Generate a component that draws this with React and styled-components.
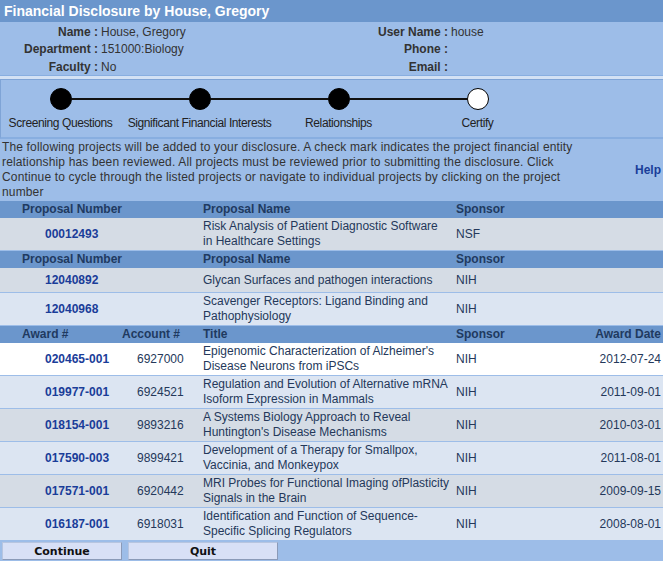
import React from "react";
import styled, { createGlobalStyle } from "styled-components";

const GlobalStyle = createGlobalStyle`
  html, body {
    margin: 0;
    padding: 0;
    background: #9dbde8;
    font-family: "Liberation Sans", Arial, sans-serif;
    font-size: 12px;
    color: #333;
  }
`;

const steps = [
  { label: "Screening Questions", done: true },
  { label: "Significant Financial Interests", done: true },
  { label: "Relationships", done: true },
  { label: "Certify", done: false },
];

const proposalGroups = [
  [{ num: "00012493", name: "Risk Analysis of Patient Diagnostic Software in Healthcare Settings", sponsor: "NSF", tone: "gray" }],
  [
    { num: "12040892", name: "Glycan Surfaces and pathogen interactions", sponsor: "NIH", tone: "gray" },
    { num: "12040968", name: "Scavenger Receptors: Ligand Binding and Pathophysiology", sponsor: "NIH", tone: "light" },
  ],
];

const awards = [
  { num: "020465-001", acct: "6927000", title: "Epigenomic Characterization of Alzheimer's Disease Neurons from iPSCs", sponsor: "NIH", date: "2012-07-24", tone: "white" },
  { num: "019977-001", acct: "6924521", title: "Regulation and Evolution of Alternative mRNA Isoform Expression in Mammals", sponsor: "NIH", date: "2011-09-01", tone: "light" },
  { num: "018154-001", acct: "9893216", title: "A Systems Biology Approach to Reveal Huntington's Disease Mechanisms", sponsor: "NIH", date: "2010-03-01", tone: "gray" },
  { num: "017590-003", acct: "9899421", title: "Development of a Therapy for Smallpox, Vaccinia, and Monkeypox", sponsor: "NIH", date: "2011-08-01", tone: "light" },
  { num: "017571-001", acct: "6920442", title: "MRI Probes for Functional Imaging ofPlasticity Signals in the Brain", sponsor: "NIH", date: "2009-09-15", tone: "gray" },
  { num: "016187-001", acct: "6918031", title: "Identification and Function of Sequence-Specific Splicing Regulators", sponsor: "NIH", date: "2008-08-01", tone: "light" },
];

const App = () => {
  return (
    <Page>
      <GlobalStyle />
      <TitleBar>Financial Disclosure by House, Gregory</TitleBar>
      <Info>
        <InfoCol>
          <Label>Name :</Label><Value>House, Gregory</Value>
          <Label>Department :</Label><Value>151000:Biology</Value>
          <Label>Faculty :</Label><Value>No</Value>
        </InfoCol>
        <InfoCol $right>
          <Label>User Name :</Label><Value>house</Value>
          <Label>Phone :</Label><Value />
          <Label>Email :</Label><Value />
        </InfoCol>
      </Info>
      <Spacer />
      <Steps>
        <StepTrack>
          {steps.map((s, i) => (
            <Step key={s.label}>
              <Track>
                <Connector $off={i === 0} />
                <Dot $done={s.done} />
                <Connector $off={i === steps.length - 1} />
              </Track>
              <StepLabel>{s.label}</StepLabel>
            </Step>
          ))}
        </StepTrack>
      </Steps>
      <Intro>
        <IntroText>
          The following projects will be added to your disclosure. A check mark indicates the project financial entity
          relationship has been reviewed. All projects must be reviewed prior to submitting the disclosure. Click
          Continue to cycle through the listed projects or navigate to individual projects by clicking on the project
          number
        </IntroText>
        <Help>Help</Help>
      </Intro>

      {proposalGroups.map((group, gi) => (
        <Table key={gi} $cols="200px 253px 1fr">
          <HeadCell $pad="22px">Proposal Number</HeadCell>
          <HeadCell>Proposal Name</HeadCell>
          <HeadCell>Sponsor</HeadCell>
          {group.map((p) => (
            <Row key={p.num} $tone={p.tone}>
              <NumCell>{p.num}</NumCell>
              <Cell $padR="6px">{p.name}</Cell>
              <Cell>{p.sponsor}</Cell>
            </Row>
          ))}
        </Table>
      ))}

      <Table $cols="118px 82px 253px 107px 1fr">
        <HeadCell $pad="22px">Award #</HeadCell>
        <HeadCell $pad="4px">Account #</HeadCell>
        <HeadCell>Title</HeadCell>
        <HeadCell>Sponsor</HeadCell>
        <HeadCell $alignRight>Award Date</HeadCell>
        {awards.map((a) => (
          <Row key={a.num} $tone={a.tone}>
            <NumCell>{a.num}</NumCell>
            <Cell $pad="19px">{a.acct}</Cell>
            <Cell $padR="0px">{a.title}</Cell>
            <Cell>{a.sponsor}</Cell>
            <Cell $alignRight>{a.date}</Cell>
          </Row>
        ))}
      </Table>

      <Buttons>
        <Button $w="120px">Continue</Button>
        <Button $w="150px">Quit</Button>
      </Buttons>
    </Page>
  );
};

export default App;

const Page = styled.div`
  width: 663px;
  min-height: 561px;
  background: #9dbde8;
`;

const TitleBar = styled.div`
  height: 22px;
  line-height: 22px;
  padding-left: 4px;
  background: #6b96cc;
  color: #fff;
  font-weight: bold;
  font-size: 14px;
`;

const Info = styled.div`
  display: flex;
  height: 52px;
  padding-top: 1px;
  border-bottom: 1px solid #88aee0;
  background: #9dbde8;
`;

const InfoCol = styled.div`
  display: grid;
  grid-template-columns: ${(p) => (p.$right ? "451px 1fr" : "101px 230px")};
  grid-auto-rows: 17.5px;
  align-items: center;
  margin-left: ${(p) => (p.$right ? "-331px" : "0")};
`;

const Label = styled.span`
  text-align: right;
  font-weight: bold;
  color: #333;
  padding-right: 3px;
`;

const Value = styled.span`
  color: #333;
`;

const Spacer = styled.div`
  height: 3px;
  background: #d3e1f4;
`;

const Steps = styled.div`
  padding-top: 7px;
  height: 50px;
  border-top: 1px solid #7fa4d6;
  border-left: 1px solid #7fa4d6;
  border-bottom: 2px solid #88aee0;
  overflow: hidden;
`;

const StepTrack = styled.div`
  display: grid;
  grid-template-columns: repeat(4, 139px);
  margin-left: -10px;
`;

const Step = styled.div`
  display: flex;
  flex-direction: column;
  align-items: center;
`;

const Track = styled.div`
  display: flex;
  align-items: center;
  width: 100%;
  height: 24px;
`;

const Connector = styled.div`
  flex: 1;
  height: 2px;
  background: ${(p) => (p.$off ? "transparent" : "#111")};
`;

const Dot = styled.div`
  width: 20px;
  height: 20px;
  border-radius: 50%;
  border: 1px solid #000;
  background: ${(p) => (p.$done ? "#000" : "#fff")};
  flex-shrink: 0;
`;

const StepLabel = styled.div`
  margin-top: 5px;
  font-size: 12px;
  letter-spacing: -0.4px;
  color: #222;
  white-space: nowrap;
`;

const Intro = styled.div`
  display: flex;
  align-items: center;
  padding: 1px 2px 1px 2px;
`;

const IntroText = styled.div`
  width: 575px;
  line-height: 15px;
  letter-spacing: 0.15px;
  color: #333;
`;

const Help = styled.a`
  margin-left: auto;
  font-weight: bold;
  color: #1a3d99;
`;

const Table = styled.div`
  display: grid;
  grid-template-columns: ${(p) => p.$cols};
`;

const HeadCell = styled.div`
  background: #6b96cc;
  font-weight: bold;
  color: #1f3a60;
  height: 17px;
  line-height: 17px;
  padding-left: ${(p) => p.$pad || "3px"};
  padding-right: 2px;
  text-align: ${(p) => (p.$alignRight ? "right" : "left")};
  white-space: nowrap;
`;

const toneColors = { white: "#ffffff", light: "#dce5f2", gray: "#d5dce5" };

const Row = styled.div`
  display: contents;
  & > * {
    background: ${(p) => toneColors[p.$tone]};
    border-bottom: 1px solid #9dbde8;
  }
`;

const Cell = styled.div`
  display: flex;
  align-items: center;
  justify-content: ${(p) => (p.$alignRight ? "flex-end" : "flex-start")};
  min-height: 22px;
  padding: 1px ${(p) => p.$padR || "2px"} 1px ${(p) => p.$pad || "3px"};
  line-height: 15px;
  color: #24385a;
`;

const NumCell = styled(Cell)`
  padding-left: 45px;
  font-weight: bold;
  color: #1a3d99;
`;

const Buttons = styled.div`
  display: flex;
  gap: 6px;
  padding: 1px 2px;
`;

const Button = styled.button`
  width: ${(p) => p.$w};
  height: 18px;
  padding: 0;
  background: #d8e0f6;
  border: 1px solid #b7c5e0;
  border-bottom-color: #8a9ab8;
  border-right-color: #8a9ab8;
  font-family: "DejaVu Sans", sans-serif;
  font-weight: bold;
  font-size: 11px;
  color: #111;
`;
